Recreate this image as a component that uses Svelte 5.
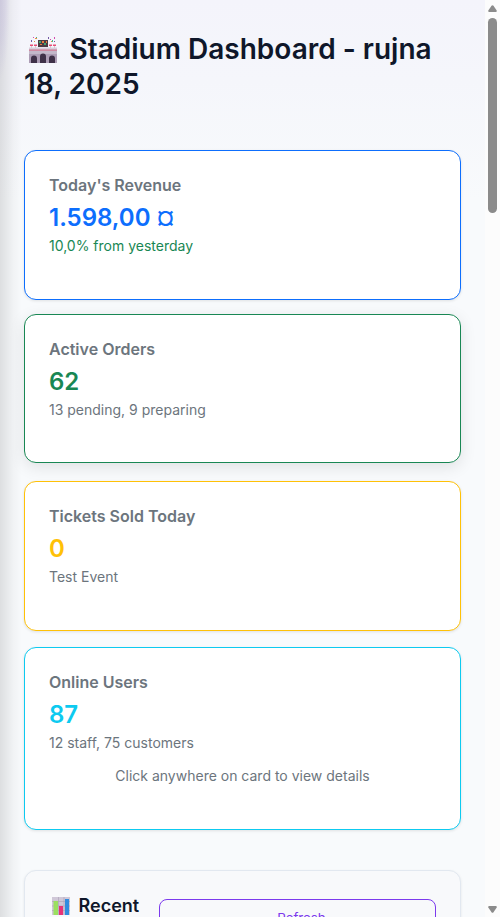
<script>
  const cards = [
    { title: "Today's Revenue", value: '1.598,00 ¤', note: '10,0% from yesterday', tone: 'primary' },
    { title: 'Active Orders', value: '62', note: '13 pending, 9 preparing', tone: 'success' },
    { title: 'Tickets Sold Today', value: '0', note: 'Test Event', tone: 'warning' },
    { title: 'Online Users', value: '87', note: '12 staff, 75 customers', tone: 'info', hint: 'Click anywhere on card to view details' }
  ];
</script>

<div class="screen">
  <main>
    <h1>
      <svg class="stadium" viewBox="0 0 28 28" aria-hidden="true">
        <path fill="#c3b8ca" d="M0 13h28v14H0z" />
        <path fill="#ad9db5" d="M0 18h28v9H0z" />
        <path fill="#d8cfdd" d="M0 11.500h28v2H0z" />
        <path fill="#d86a85" d="M0 13.600h28v1H0z" />
        <path fill="#3f3148" d="M2 27v-4.500a3 3 0 0 1 6 0V27zM11 27v-6.500a3 3 0 0 1 6 0V27zM20 27v-4.500a3 3 0 0 1 6 0V27z" />
        <path fill="#493b43" d="M9 4h10v7H9z" />
        <path fill="#44a36e" d="M10 5h2v2h-2zM15 7h2v2h-2z" />
        <path fill="#e57a3e" d="M13 5h2v2h-2zM11 8h2v1h-2zM17 5h1v2h-1z" />
        <path fill="#e84d76" d="M1 8.500h3V10H1zM5 8.500h3V10H5zM20 8.500h3V10h-3zM24 8.500h3V10h-3z" />
        <path stroke="#d8c5d2" d="M2.500 10v2M6.500 10v2M21.500 10v2M25.500 10v2" />
        <path fill="#7358a5" d="M2 4h1v2H2zM19 1h1v2h-1zM25 5h1v1h-1z" />
        <path fill="#ef8b43" d="M6 2h2v1H6zM5 5h1v1H5zM22 5h1v1h-1z" />
        <path fill="#3fb78b" d="M7 1h1v1H7zM23 4h1v2h-1z" />
        <path fill="#d34bad" d="M4 1h1v1H4zM25 1h1v2h-1zM21 3h1v1h-1z" />
      </svg>Stadium Dashboard - rujna 18, 2025
    </h1>
    <section class="cards">
      {#each cards as card}
        <article class="card {card.tone}">
          <h2>{card.title}</h2>
          <div class="value">{card.value}</div>
          <p>{card.note}</p>
          {#if card.hint}<p class="hint">{card.hint}</p>{/if}
        </article>
      {/each}
    </section>
    <section class="panel">
      <h3>
        <svg class="chart" viewBox="0 0 18 18" aria-hidden="true">
          <path fill="#d0c8d8" d="M0 0h18v18H0z" />
          <path stroke="#aaa0b5" stroke-width=".6" d="M0 4.500h18M0 9h18M0 13.500h18M6.500 0v18M12 0v18" />
          <path fill="#9be060" d="M1.500 4H6v14H1.500z" />
          <path fill="#e83278" d="M7 9h4v9H7z" />
          <path fill="#318ce0" d="M13 2h4v16h-4z" />
        </svg>Recent
      </h3>
      <button>Refresh</button>
    </section>
  </main>
  <div class="scrollbar">
    <svg width="9" height="7" viewBox="0 0 9 7"><path fill="#8b8b8b" d="M3.500.8Q4.500-.5 5.500.8L8.700 5.500Q9 7 8 7H1Q0 7 .3 5.500z" /></svg>
    <span class="thumb"></span>
    <svg class="down" width="9" height="7" viewBox="0 0 9 7"><path fill="#8b8b8b" d="M3.500 6.200Q4.500 7.500 5.500 6.200L8.700 1.500Q9 0 8 0H1Q0 0 .3 1.500z" /></svg>
  </div>
  <div class="edge"></div>
</div>

<style>
  * { box-sizing: border-box; }
  .screen {
    position: relative;
    display: flex;
    width: 500px;
    height: 917px;
    overflow: hidden;
    font-family: Inter, "Liberation Sans", sans-serif;
    background: linear-gradient(#f4f4fb 0, #f5f6fb 80px, #f8fafc 200px);
  }
  main { flex: 1; padding: 32px 24px 0; }
  h1 {
    height: 70px;
    margin: 0 0 48px;
    color: #0f172a;
    font-size: 28px;
    font-weight: 600;
    line-height: 35px;
  }
  .stadium { width: 28px; height: 28px; margin: 0 12.500px 0 5px; vertical-align: -5px; }
  .cards { display: flex; flex-direction: column; }
  .card {
    height: 150px;
    padding: 24px;
    border: 1px solid var(--tone);
    border-radius: 12px;
    background: #fff;
    box-shadow: 0 1px 3px #0000001a;
  }
  .primary { --tone: #0d6efd; margin-bottom: 14px; }
  .success { --tone: #198754; height: 149px; margin-bottom: 18px; box-shadow: 0 4px 16px #0000001a; }
  .warning { --tone: #ffc107; margin-bottom: 16px; }
  .info { --tone: #0dcaf0; height: 183px; }
  h2 { margin: 0; color: #6c757d; font-size: 16px; font-weight: 600; line-height: 20px; }
  .value { margin-top: 8px; color: var(--tone); font-size: 24px; font-weight: 600; line-height: 29px; }
  p { margin: 3px 0 0; color: #6c757d; font-size: 14px; line-height: 21px; }
  .primary p { color: #198754; }
  .hint { margin-top: 12px; text-align: center; }
  .panel {
    display: flex;
    align-items: flex-start;
    height: 180px;
    margin-top: 40px;
    padding: 24px;
    border: 1px solid #e2e8f0;
    border-radius: 12px;
    background: #f8f9fb;
    box-shadow: 0 1px 3px #00000014;
  }
  h3 { width: 110px; margin: 0; color: #0f172a; font-size: 18px; font-weight: 600; line-height: 22px; white-space: nowrap; }
  .chart { width: 18px; height: 18px; margin: 0 8.500px 0 3px; vertical-align: -3px; }
  button {
    width: 277px;
    height: 38px;
    margin-top: 4px;
    padding: 0 0 0 8px;
    border: 1px solid #7c3aed;
    border-radius: 8px;
    color: #7c3aed;
    background: transparent;
    font: 400 13.300px/36px Inter, sans-serif;
  }
  .scrollbar {
    display: flex;
    flex-direction: column;
    align-items: center;
    width: 15px;
    padding: 5px 0 4px 0;
    background: #fcfcfc;
  }
  .thumb { width: 9px; height: 195px; margin-top: 6px; border-radius: 5px; background: #8b8b8b; }
  .down { margin-top: auto; }
  .edge {
    position: absolute;
    inset: 0 auto 0 0;
    width: 22px;
    pointer-events: none;
    background:
      linear-gradient(90deg, #0000001c, #00000013 6px, #00000008 13px, #00000000 22px),
      radial-gradient(ellipse 10px 80px at 0 0, #6d4bd81c, #6d4bd814 50%, #6d4bd800);
  }
</style>
